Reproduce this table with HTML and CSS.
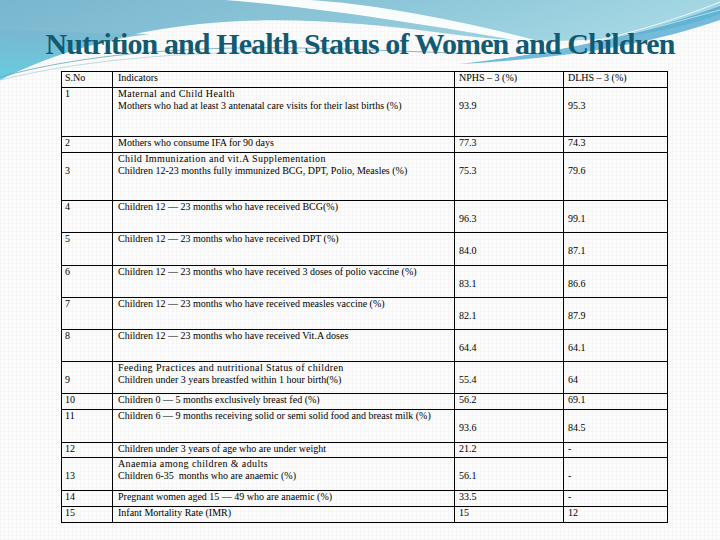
FILE: index.html
```html
<!DOCTYPE html>
<html>
<head>
<meta charset="utf-8">
<link rel="stylesheet" href="styles.css">
</head>
<body>
<div class="slide">
  <svg class="bg" width="720" height="100" viewBox="0 0 720 100" aria-hidden="true">
    <defs>
      <linearGradient id="g1" x1="0" y1="0" x2="1" y2="0.35">
        <stop offset="0" stop-color="#78b6cf"/>
        <stop offset="0.5" stop-color="#8cc6d8"/>
        <stop offset="1" stop-color="#aadbe6"/>
      </linearGradient>
      <linearGradient id="g2" x1="0" y1="0" x2="0" y2="1">
        <stop offset="0" stop-color="#78b6cf"/>
        <stop offset="1" stop-color="#5fd0e2"/>
      </linearGradient>
    </defs>
    <path d="M0,0 H720 V14 C640,44 540,46 450,34 C360,22 280,16 200,24 C120,32 50,55 0,80 Z" fill="url(#g1)"/>
    <path d="M0,30 C40,30 90,34 150,34 C100,40 40,58 0,80 Z" fill="url(#g2)" opacity="0.8"/>
    <path d="M225,0 C330,8 460,30 570,50 C490,26 380,4 310,0 Z" fill="#ffffff" opacity="0.95"/>
    <path d="M460,64 C560,52 650,32 720,6 V20 C650,44 570,58 460,64 Z" fill="#4aa7cf" opacity="0.75"/>
    <path d="M420,66 C560,56 650,30 720,2" stroke="#ffffff" stroke-width="1" fill="none" opacity="0.8"/>
    <path d="M440,64 C570,54 660,26 720,10" stroke="#ffffff" stroke-width="0.8" fill="none" opacity="0.7"/>
    <path d="M0,77 C80,55 180,46 300,48 C360,49 420,52 480,54" stroke="#6ea7b7" stroke-width="1" fill="none" opacity="0.8"/>
    <path d="M0,80 C90,58 200,50 330,52" stroke="#a6cdd6" stroke-width="1" fill="none" opacity="0.7"/>
  </svg>
  <h1 class="title">Nutrition and Health Status of Women and Children</h1>
  <table class="data">
    <colgroup>
      <col class="c-no"><col class="c-ind"><col class="c-n"><col class="c-d">
    </colgroup>
    <tr class="h16"><td>S.No</td><td>Indicators</td><td>NPHS – 3 (%)</td><td>DLHS – 3 (%)</td></tr>
    <tr class="h49"><td>1</td><td><span class="head">Maternal and Child Health</span><br>Mothers who had at least 3 antenatal care visits for their last births (%)</td><td class="l2">93.9</td><td class="l2">95.3</td></tr>
    <tr class="h16"><td>2</td><td>Mothers who consume IFA for 90 days</td><td>77.3</td><td>74.3</td></tr>
    <tr class="h48"><td class="l2">3</td><td><span class="head">Child Immunization and vit.A Supplementation</span><br>Children 12-23 months fully immunized BCG, DPT, Polio, Measles (%)</td><td class="l2">75.3</td><td class="l2">79.6</td></tr>
    <tr class="h32"><td>4</td><td>Children 12 — 23 months who have received BCG(%)</td><td class="l2">96.3</td><td class="l2">99.1</td></tr>
    <tr class="h33"><td>5</td><td>Children 12 — 23 months who have received DPT (%)</td><td class="l2">84.0</td><td class="l2">87.1</td></tr>
    <tr class="h32"><td>6</td><td>Children 12 — 23 months who have received 3 doses of polio vaccine (%)</td><td class="l2">83.1</td><td class="l2">86.6</td></tr>
    <tr class="h32"><td>7</td><td>Children 12 — 23 months who have received measles vaccine (%)</td><td class="l2">82.1</td><td class="l2">87.9</td></tr>
    <tr class="h32"><td>8</td><td>Children 12 — 23 months who have received Vit.A doses</td><td class="l2">64.4</td><td class="l2">64.1</td></tr>
    <tr class="h32"><td class="l2">9</td><td><span class="head">Feeding Practices and nutritional Status of children</span><br>Children under 3 years breastfed within 1 hour birth(%)</td><td class="l2">55.4</td><td class="l2">64</td></tr>
    <tr class="h16"><td>10</td><td>Children 0 — 5 months exclusively breast fed (%)</td><td>56.2</td><td>69.1</td></tr>
    <tr class="h33"><td>11</td><td>Children 6 — 9 months receiving solid or semi solid food and breast milk (%)</td><td class="l2">93.6</td><td class="l2">84.5</td></tr>
    <tr class="h15"><td>12</td><td>Children under 3 years of age who are under weight</td><td>21.2</td><td>-</td></tr>
    <tr class="h33"><td class="l2">13</td><td><span class="head">Anaemia among children &amp; adults</span><br>Children 6-35&nbsp; months who are anaemic (%)</td><td class="l2">56.1</td><td class="l2">-</td></tr>
    <tr class="h16"><td>14</td><td>Pregnant women aged 15 — 49 who are anaemic (%)</td><td>33.5</td><td>-</td></tr>
    <tr class="h16"><td>15</td><td>Infant Mortality Rate (IMR)</td><td>15</td><td>12</td></tr>
  </table>
</div>
</body>
</html>
```

FILE: styles.css
```css
html, body {
  margin: 0;
  padding: 0;
}
body {
  width: 720px;
  height: 540px;
  overflow: hidden;
  background-color: #fcfcfc;
  background-image:
    repeating-linear-gradient(0deg, rgba(0,0,0,0.02) 0 1px, transparent 1px 4px),
    repeating-linear-gradient(90deg, rgba(0,0,0,0.02) 0 1px, transparent 1px 4px);
}
.slide {
  position: relative;
  width: 720px;
  height: 540px;
}
.bg {
  position: absolute;
  left: 0;
  top: 0;
  z-index: 0;
}
.title {
  position: relative;
  z-index: 1;
  margin: 0;
  padding-top: 28px;
  height: 32px;
  line-height: 32px;
  font-family: "Liberation Serif", "Times New Roman", "DejaVu Serif", serif;
  font-weight: bold;
  font-size: 30px;
  letter-spacing: -0.9px;
  color: #115a72;
  text-align: center;
  white-space: nowrap;
}
.data {
  position: relative;
  z-index: 1;
  margin: 11px 0 0 61px;
  border-collapse: collapse;
  table-layout: fixed;
  width: 606px;
  font-family: "Liberation Serif", "Times New Roman", "DejaVu Serif", serif;
  font-size: 10px;
  line-height: 12px;
  color: #000;
}
.c-no { width: 51px; }
.c-ind { width: 342px; }
.c-n { width: 109px; }
.c-d { width: 104px; }
.data td {
  border: 1px solid #000;
  vertical-align: top;
  padding: 0 3px 0 4px;
  white-space: nowrap;
  overflow: hidden;
}
.data td:first-child { padding-left: 3px; }
.data td:nth-child(2) { padding-left: 5px; }
.data td.l2 { padding-top: 12px; }
.head { letter-spacing: 0.4px; }
.h15 { height: 15px; }
.h16 { height: 16px; }
.h32 { height: 32px; }
.h33 { height: 33px; }
.h48 { height: 48px; }
.h49 { height: 49px; }
```
